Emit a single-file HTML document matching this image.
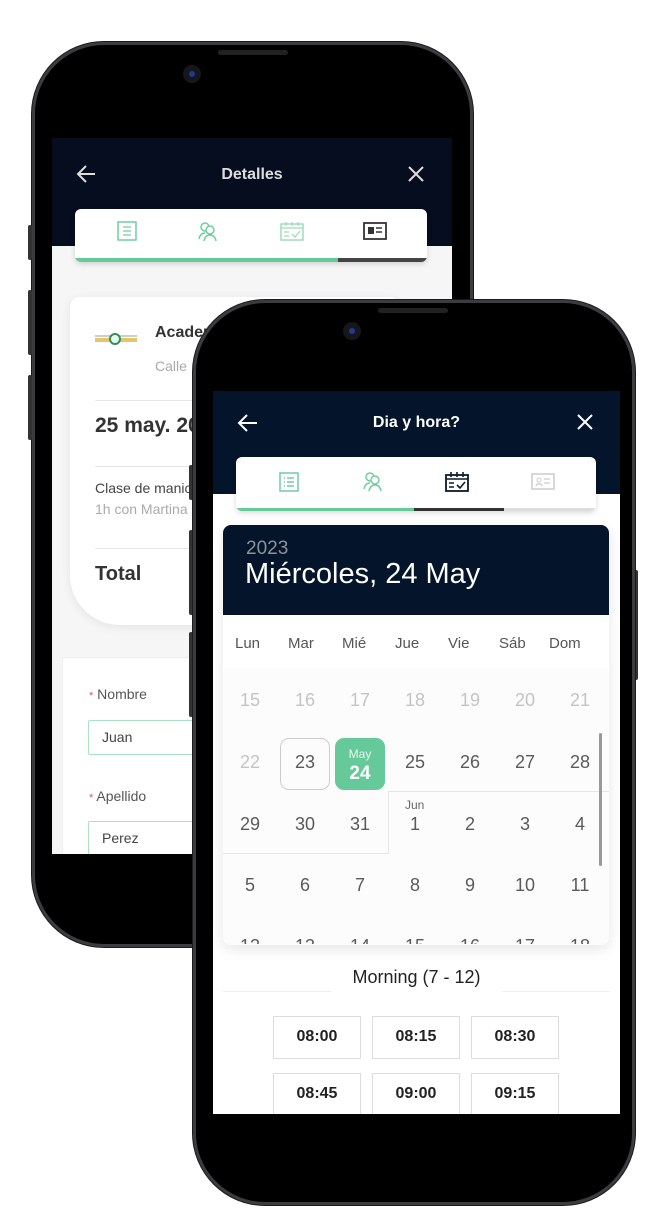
<!DOCTYPE html>
<html><head><meta charset="utf-8">
<style>
*{margin:0;padding:0;box-sizing:border-box}
body{width:664px;height:1224px;background:#fff;position:relative;overflow:hidden;font-family:"Liberation Sans",sans-serif}
.a{position:absolute}
.frame{border-radius:72px;background:#000;border:3px solid #3c3c40;box-shadow:0 0 0 1px #1a1a1a}
.t{position:absolute;white-space:nowrap}
</style></head><body>

<!-- BACK PHONE -->
<div class="a frame" style="left:32px;top:42px;width:441px;height:905px"></div>
<div class="a" style="left:218px;top:50px;width:70px;height:5px;border-radius:3px;background:#222"></div>
<div class="a" style="left:183px;top:65px;width:18px;height:18px;border-radius:50%;background:#15171c"></div>
<div class="a" style="left:189px;top:71px;width:6px;height:6px;border-radius:50%;background:#203a8a"></div>
<div class="a" style="left:28px;top:225px;width:4px;height:35px;background:#333;border-radius:2px"></div>
<div class="a" style="left:28px;top:290px;width:4px;height:65px;background:#333;border-radius:2px"></div>
<div class="a" style="left:28px;top:375px;width:4px;height:65px;background:#333;border-radius:2px"></div>
<div class="a" style="left:52px;top:138px;width:400px;height:716px;background:#f6f6f6;overflow:hidden">
  <div class="a" style="left:0;top:0;width:400px;height:108px;background:#050d1f"></div>
  <svg class="a" style="left:24px;top:26px" width="22" height="20" viewBox="0 0 22 20"><path d="M19 10H3M10 2L2 10l8 8" stroke="#ddd" stroke-width="2" fill="none"/></svg>
  <div class="t" style="left:0;width:400px;top:28px;text-align:center;color:#ddd;font-weight:bold;font-size:16px">Detalles</div>
  <svg class="a" style="left:355px;top:27px" width="18" height="18"><path d="M2 2L16 16M16 2L2 16" stroke="#ddd" stroke-width="2"/></svg>
  <div class="a" style="left:23px;top:71px;width:352px;height:53px;background:#fff;border-radius:6px;box-shadow:0 2px 6px rgba(0,0,0,.15);overflow:hidden">
    <div class="a" style="left:0;bottom:0;width:263px;height:4px;background:#66c99a"></div>
    <div class="a" style="left:263px;bottom:0;width:89px;height:4px;background:#444"></div>
    <svg class="a" style="left:42px;top:12px" width="20" height="20"><rect x="1" y="1" width="18" height="18" fill="none" stroke="#6fcf9f" stroke-width="1.5"/><path d="M6 6h8M6 10h8M6 14h8" stroke="#6fcf9f" stroke-width="1.3"/></svg>
    <svg class="a" style="left:122px;top:11px" width="22" height="22"><circle cx="8" cy="7" r="4" fill="none" stroke="#6fcf9f" stroke-width="1.5"/><circle cx="13" cy="10" r="4" fill="#fff" stroke="#6fcf9f" stroke-width="1.5"/><path d="M2 19c1-5 4-6 6-6M7 21c1-5 4-6 6-6s5 1 6 6" fill="none" stroke="#6fcf9f" stroke-width="1.5"/></svg>
    <svg class="a" style="left:205px;top:12px" width="24" height="20"><rect x="1" y="3" width="22" height="16" fill="none" stroke="#9fdcbc" stroke-width="1.5"/><path d="M1 7h22M6 1v4M12 1v4M18 1v4M4 11h5M4 15h5M12 13l3 3 5-6" fill="none" stroke="#9fdcbc" stroke-width="1.3"/></svg>
    <svg class="a" style="left:288px;top:13px" width="24" height="18"><rect x="1" y="1" width="22" height="16" fill="none" stroke="#333" stroke-width="1.8"/><rect x="5" y="5" width="6" height="7" fill="#333"/><path d="M13 6h6M13 10h6" stroke="#333" stroke-width="1.5"/></svg>
  </div>
  <div class="a" style="left:18px;top:159px;width:330px;height:328px;background:#fff;border-radius:10px 10px 10px 50px;box-shadow:0 2px 10px rgba(0,0,0,.08)"></div>
  <div class="a" style="left:43px;top:200px;width:42px;height:4px;background:#e7c46a"></div>
  <div class="a" style="left:43px;top:197px;width:42px;height:2px;background:#c9d0c8"></div>
  <div class="a" style="left:57px;top:195px;width:12px;height:12px;border-radius:50%;border:2px solid #3b8a5a;background:#dfe"></div>
  <div class="t" style="left:103px;top:186px;font-size:16px;font-weight:bold;color:#333">Academia</div>
  <div class="t" style="left:103px;top:220px;font-size:14px;color:#aaa">Calle</div>
  <div class="a" style="left:43px;top:262px;width:300px;height:1px;background:#e6e6e6"></div>
  <div class="t" style="left:43px;top:276px;font-size:21px;font-weight:bold;color:#333">25 may. 2023</div>
  <div class="a" style="left:43px;top:328px;width:300px;height:1px;background:#e6e6e6"></div>
  <div class="t" style="left:43px;top:342px;font-size:14px;color:#444">Clase de manicura</div>
  <div class="t" style="left:43px;top:363px;font-size:14px;color:#aaa">1h con Martina</div>
  <div class="a" style="left:43px;top:410px;width:300px;height:1px;background:#e6e6e6"></div>
  <div class="t" style="left:43px;top:425px;font-size:20px;font-weight:bold;color:#333">Total</div>
  <div class="a" style="left:10px;top:519px;width:390px;height:220px;background:#fff;border:1px solid #eee"></div>
  <div class="t" style="left:37px;top:548px;font-size:14px;color:#555"><span style="color:#e55;font-size:11px">*</span> Nombre</div>
  <div class="a" style="left:36px;top:582px;width:300px;height:35px;border:1.5px solid #a8e3c4;border-radius:2px"></div>
  <div class="t" style="left:50px;top:591px;font-size:14px;color:#444">Juan</div>
  <div class="t" style="left:37px;top:650px;font-size:14px;color:#555"><span style="color:#e55;font-size:11px">*</span> Apellido</div>
  <div class="a" style="left:36px;top:683px;width:300px;height:35px;border:1.5px solid #a8e3c4;border-radius:2px"></div>
  <div class="t" style="left:50px;top:692px;font-size:14px;color:#444">Perez</div>
</div>

<!-- FRONT PHONE -->
<div class="a" style="left:189px;top:465px;width:4px;height:35px;background:#333;border-radius:2px;z-index:1"></div>
<div class="a" style="left:189px;top:530px;width:4px;height:85px;background:#333;border-radius:2px;z-index:1"></div>
<div class="a" style="left:189px;top:632px;width:4px;height:85px;background:#333;border-radius:2px;z-index:1"></div>
<div class="a" style="left:634px;top:570px;width:4px;height:110px;background:#333;border-radius:2px"></div>
<div class="a frame" style="left:193px;top:300px;width:442px;height:905px;z-index:2"></div>
<div class="a" style="left:378px;top:308px;width:70px;height:5px;border-radius:3px;background:#222;z-index:3"></div>
<div class="a" style="left:343px;top:322px;width:18px;height:18px;border-radius:50%;background:#15171c;z-index:3"></div>
<div class="a" style="left:349px;top:328px;width:6px;height:6px;border-radius:50%;background:#203a8a;z-index:3"></div>

<div class="a" style="left:213px;top:391px;width:407px;height:723px;background:#fff;overflow:hidden;z-index:3">
  <div class="a" style="left:0;top:0;width:407px;height:103px;background:#04142a"></div>
  <svg class="a" style="left:24px;top:22px" width="22" height="20" viewBox="0 0 22 20"><path d="M20 10H3M10 2L2 10l8 8" stroke="#fff" stroke-width="2" fill="none"/></svg>
  <div class="t" style="left:0;width:407px;top:23px;text-align:center;color:#fff;font-weight:bold;font-size:16px">Dia y hora?</div>
  <svg class="a" style="left:363px;top:22px" width="18" height="18"><path d="M2 2L16 16M16 2L2 16" stroke="#fff" stroke-width="2"/></svg>
  <div class="a" style="left:23px;top:66px;width:360px;height:54px;background:#fff;border-radius:6px;box-shadow:0 2px 6px rgba(0,0,0,.15);overflow:hidden">
    <div class="a" style="left:0;bottom:0;width:178px;height:3px;background:#66c99a"></div>
    <div class="a" style="left:178px;bottom:0;width:90px;height:3px;background:#333"></div>
    <div class="a" style="left:268px;bottom:0;width:92px;height:3px;background:#ddd"></div>
    <svg class="a" style="left:43px;top:15px" width="20" height="20"><rect x="1" y="1" width="18" height="18" fill="none" stroke="#6fcf9f" stroke-width="1.5"/><path d="M5 6h1M8 6h7M5 10h1M8 10h7M5 14h1M8 14h7" stroke="#6fcf9f" stroke-width="1.4"/></svg>
    <svg class="a" style="left:126px;top:13px" width="24" height="22"><circle cx="8" cy="7" r="4" fill="none" stroke="#6fcf9f" stroke-width="1.5"/><circle cx="13" cy="10" r="4" fill="#fff" stroke="#6fcf9f" stroke-width="1.5"/><path d="M2 19c1-5 4-6 6-6M7 21c1-5 4-6 6-6s5 1 6 6" fill="none" stroke="#6fcf9f" stroke-width="1.5"/></svg>
    <svg class="a" style="left:209px;top:14px" width="24" height="21"><rect x="1" y="4" width="22" height="16" fill="none" stroke="#0c1a2e" stroke-width="1.8"/><path d="M1 8h22M6 1v5M12 1v5M18 1v5M4 12h5M4 16h5M12 14l3 3 5-6" fill="none" stroke="#0c1a2e" stroke-width="1.6"/></svg>
    <svg class="a" style="left:295px;top:16px" width="24" height="18"><rect x="1" y="1" width="22" height="15" fill="none" stroke="#ccc" stroke-width="1.5"/><circle cx="8" cy="7" r="2" fill="none" stroke="#ccc"/><path d="M5 13c0-3 6-3 6 0M13 6h6M13 10h6" fill="none" stroke="#ccc" stroke-width="1.3"/></svg>
  </div>
  <div class="a" style="left:10px;top:134px;width:386px;height:420px;background:#fff;border-radius:8px;box-shadow:0 4px 14px rgba(0,0,0,.1);overflow:hidden">
    <div class="a" style="left:0;top:0;width:386px;height:90px;background:#04142a"></div>
    <div class="t" style="left:23px;top:13px;font-size:19px;color:#8a929c">2023</div>
    <div class="t" style="left:22px;top:33px;font-size:29px;color:#fff">Miércoles, 24 May</div>
    <div class="a" style="left:0;top:90px;width:386px;height:54px;background:#fff;box-shadow:0 3px 6px rgba(0,0,0,.06)"></div>
    <div class="a" style="left:0;top:144px;width:386px;height:276px;background:#fcfcfc"></div>
  </div>
  <div class="t" style="left:22px;top:244px;font-size:15px;color:#555">Lun</div>
  <div class="t" style="left:75px;top:244px;font-size:15px;color:#555">Mar</div>
  <div class="t" style="left:129px;top:244px;font-size:15px;color:#555">Mié</div>
  <div class="t" style="left:182px;top:244px;font-size:15px;color:#555">Jue</div>
  <div class="t" style="left:235px;top:244px;font-size:15px;color:#555">Vie</div>
  <div class="t" style="left:286px;top:244px;font-size:15px;color:#555">Sáb</div>
  <div class="t" style="left:336px;top:244px;font-size:15px;color:#555">Dom</div>
  <div class="a" style="left:10px;top:400px;width:166px;height:63px;border-right:1px solid #e6e6e6;border-bottom:1px solid #e6e6e6"></div>
  <div class="a" style="left:176px;top:400px;width:220px;height:1px;background:#e6e6e6"></div>
  <div class="a" style="left:67px;top:347px;width:50px;height:52px;border:1px solid #ccc;border-radius:9px"></div>
  <div class="a" style="left:122px;top:347px;width:50px;height:52px;background:#66c99a;border-radius:9px"></div>
  <div class="t" style="left:122px;width:50px;text-align:center;top:356px;font-size:12px;color:#e9f8ef">May</div>
  <div class="t" style="left:122px;width:50px;text-align:center;top:372px;font-size:19px;font-weight:bold;color:#fff">24</div>
  <div class="t" style="left:192px;top:407px;font-size:12px;color:#666">Jun</div>
  <div class="a" style="left:386px;top:342px;width:3px;height:133px;background:#999;border-radius:2px"></div>
  <div class="t" style="left:0;width:407px;text-align:center;top:576px;font-size:18px;color:#222">Morning (7 - 12)</div>
  <div class="a" style="left:10px;top:600px;width:108px;height:1px;background:#eee"></div>
  <div class="a" style="left:289px;top:600px;width:108px;height:1px;background:#eee"></div>
  <div class="a" style="left:60px;top:625px;width:88px;height:43px;border:1px solid #ddd"></div>
  <div class="a" style="left:159px;top:625px;width:88px;height:43px;border:1px solid #ddd"></div>
  <div class="a" style="left:258px;top:625px;width:88px;height:43px;border:1px solid #ddd"></div>
  <div class="a" style="left:60px;top:682px;width:88px;height:43px;border:1px solid #ddd"></div>
  <div class="a" style="left:159px;top:682px;width:88px;height:43px;border:1px solid #ddd"></div>
  <div class="a" style="left:258px;top:682px;width:88px;height:43px;border:1px solid #ddd"></div>
  <div class="t" style="left:60px;width:88px;text-align:center;top:637px;font-size:16px;font-weight:bold;color:#222">08:00</div>
  <div class="t" style="left:159px;width:88px;text-align:center;top:637px;font-size:16px;font-weight:bold;color:#222">08:15</div>
  <div class="t" style="left:258px;width:88px;text-align:center;top:637px;font-size:16px;font-weight:bold;color:#222">08:30</div>
  <div class="t" style="left:60px;width:88px;text-align:center;top:694px;font-size:16px;font-weight:bold;color:#222">08:45</div>
  <div class="t" style="left:159px;width:88px;text-align:center;top:694px;font-size:16px;font-weight:bold;color:#222">09:00</div>
  <div class="t" style="left:258px;width:88px;text-align:center;top:694px;font-size:16px;font-weight:bold;color:#222">09:15</div>
</div>
<style>
.d{position:absolute;width:50px;text-align:center;font-size:18px;color:#5a5a5a;z-index:4}
.l{color:#c4c4c4}
</style>
<div style="position:absolute;left:213px;top:391px;z-index:4;width:407px;height:553px;overflow:hidden">
<div class="d l" style="left:12px;top:299px">15</div><div class="d l" style="left:67px;top:299px">16</div><div class="d l" style="left:122px;top:299px">17</div><div class="d l" style="left:177px;top:299px">18</div><div class="d l" style="left:232px;top:299px">19</div><div class="d l" style="left:287px;top:299px">20</div><div class="d l" style="left:342px;top:299px">21</div>
<div class="d l" style="left:12px;top:361px">22</div><div class="d" style="left:67px;top:361px">23</div><div class="d" style="left:177px;top:361px">25</div><div class="d" style="left:232px;top:361px">26</div><div class="d" style="left:287px;top:361px">27</div><div class="d" style="left:342px;top:361px">28</div>
<div class="d" style="left:12px;top:423px">29</div><div class="d" style="left:67px;top:423px">30</div><div class="d" style="left:122px;top:423px">31</div><div class="d" style="left:177px;top:423px">1</div><div class="d" style="left:232px;top:423px">2</div><div class="d" style="left:287px;top:423px">3</div><div class="d" style="left:342px;top:423px">4</div>
<div class="d" style="left:12px;top:484px">5</div><div class="d" style="left:67px;top:484px">6</div><div class="d" style="left:122px;top:484px">7</div><div class="d" style="left:177px;top:484px">8</div><div class="d" style="left:232px;top:484px">9</div><div class="d" style="left:287px;top:484px">10</div><div class="d" style="left:342px;top:484px">11</div>
<div class="d" style="left:12px;top:545px">12</div><div class="d" style="left:67px;top:545px">13</div><div class="d" style="left:122px;top:545px">14</div><div class="d" style="left:177px;top:545px">15</div><div class="d" style="left:232px;top:545px">16</div><div class="d" style="left:287px;top:545px">17</div><div class="d" style="left:342px;top:545px">18</div>
</div>
</body></html>
